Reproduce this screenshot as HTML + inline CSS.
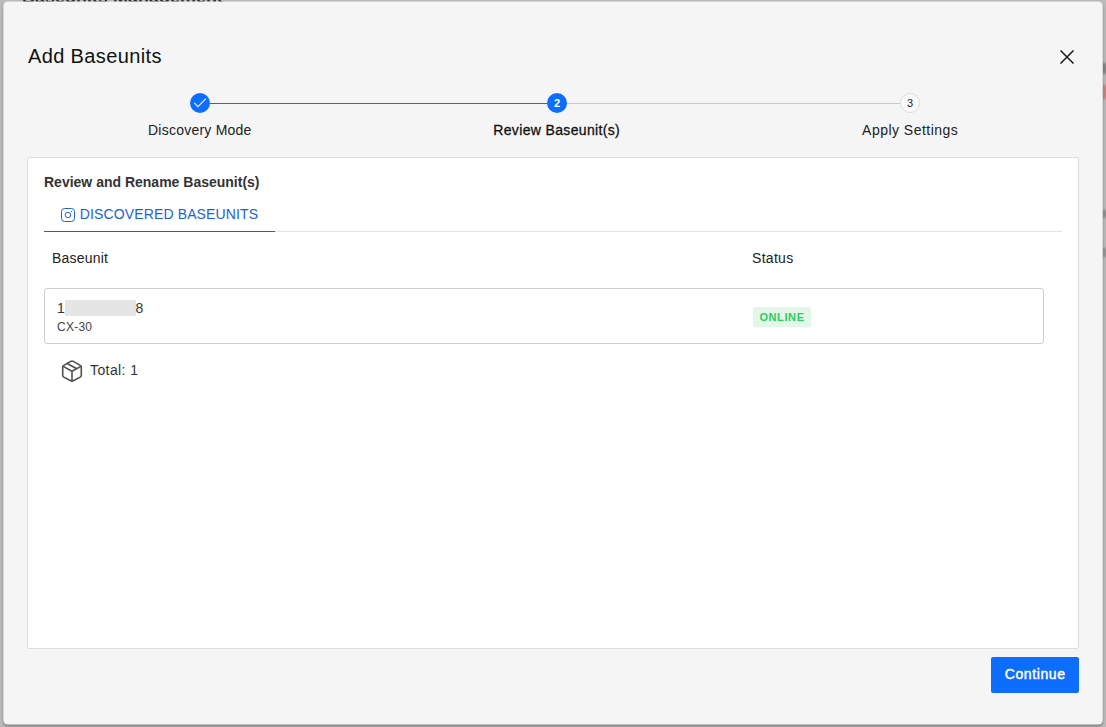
<!DOCTYPE html>
<html><head><meta charset="utf-8"><title>Add Baseunits</title>
<style>
*{box-sizing:border-box;margin:0;padding:0}
html,body{width:1106px;height:727px;overflow:hidden}
body{background:#bbbbbb;font-family:"Liberation Sans",sans-serif;color:#222;position:relative}
.behind{position:absolute;left:22px;top:-13px;font-size:18px;font-weight:bold;color:#333;white-space:nowrap;filter:blur(.5px)}
.modalbg{position:absolute;left:0;top:0;filter:drop-shadow(0 2px 1.5px rgba(0,0,0,.32))}
.modal{position:absolute;left:3px;top:1px;width:1100px;height:723.5px}
.spot{position:absolute;right:0;width:3px;filter:blur(1px)}
.abs{position:absolute;white-space:nowrap;line-height:1}
.title{left:25px;top:45px;font-size:20px;color:#111;letter-spacing:.37px}
.close{position:absolute;left:1056.8px;top:49px;width:14px;height:14px}
.line{position:absolute;height:1px;top:101.5px}
.circ{position:absolute;top:92px;width:20px;height:20px;border-radius:50%;background:#0d6efd;color:#fff;font-size:11px;font-weight:bold;text-align:center;line-height:20px}
.lbl{font-size:14px;top:122px;color:#222;transform:translateX(-50%)}
.panel{position:absolute;left:24px;top:156px;width:1052px;height:492px;background:#fff;border:1px solid #dcdcdc;border-radius:2px}
.btn{position:absolute;left:988px;top:656px;width:88px;height:36px;background:#0d6efd;border-radius:2px;color:#fff;font-size:14px;font-weight:normal;-webkit-text-stroke:.45px #fff;letter-spacing:.6px;text-indent:.3px;text-align:center;line-height:35px}
</style></head><body>
<div class="behind">Baseunits Management</div>
<div class="spot" style="top:63px;height:11px;background:#777"></div>
<div class="spot" style="top:85px;height:14px;background:#c87474"></div>
<div class="spot" style="top:210px;height:8px;background:#848484"></div>
<div class="spot" style="top:248px;height:9px;background:#888"></div>
<svg class="modalbg" width="1106" height="727" viewBox="0 0 1106 727"><rect x="3.3" y="1.4" width="1099.4" height="723.2" rx="4.5" fill="#f5f5f5"/></svg>
<div class="modal">
  <div class="abs title">Add Baseunits</div>
  <svg class="close" viewBox="0 0 14 14"><path d="M0.5 0.5L13.5 13.5M13.5 0.5L0.5 13.5" stroke="#1a1a1a" stroke-width="1.5" fill="none"/></svg>

  <div class="line" style="left:207px;width:337px;background:#0d6efd"></div>
  <div class="line" style="left:564px;width:333px;background:#c8c8c8"></div>
  <div class="circ" style="left:187px"><svg width="20" height="20" viewBox="0 0 20 20" style="display:block"><path d="M4.3 9.9L7.9 13.6L16 5.6" stroke="#e6efff" stroke-width="1.3" fill="none"/></svg></div>
  <div class="circ" style="left:544px">2</div>
  <div class="circ" style="left:897px;background:#fafafa;border:1px solid #dcdcdc;color:#222;font-weight:normal;line-height:18px">3</div>
  <div class="abs lbl" style="left:196.8px;letter-spacing:.23px">Discovery Mode</div>
  <div class="abs lbl" style="left:553.7px;color:#111;letter-spacing:.35px;-webkit-text-stroke:.3px #111">Review Baseunit(s)</div>
  <div class="abs lbl" style="left:907.2px;letter-spacing:.48px">Apply Settings</div>

  <div class="panel">
    <div class="abs" style="left:16px;top:17px;font-size:14px;font-weight:bold;color:#333">Review and Rename Baseunit(s)</div>
    <div style="position:absolute;left:16px;top:73px;width:1018px;height:1px;background:#e4e4e4"></div>
    <div style="position:absolute;left:16px;top:72.5px;width:231px;height:1.5px;background:#1b62d6"></div>
    <svg style="position:absolute;left:33px;top:50px" width="14" height="14" viewBox="0 0 14 14"><rect x=".5" y=".5" width="13" height="13" rx="3" fill="none" stroke="#1b62d6" stroke-width="1"/><circle cx="6.9" cy="7" r="2.75" fill="none" stroke="#1b62d6" stroke-width="1"/><circle cx="10.6" cy="3.4" r=".6" fill="#1b62d6"/></svg>
    <div class="abs" style="left:51.8px;top:49px;font-size:14px;letter-spacing:.13px;color:#1b62d6">DISCOVERED BASEUNITS</div>
    <div class="abs" style="left:24px;top:93px;font-size:14px;letter-spacing:.2px;color:#222">Baseunit</div>
    <div class="abs" style="left:724px;top:93px;font-size:14px;letter-spacing:.3px;color:#222">Status</div>
    <div style="position:absolute;left:16px;top:130px;width:1000px;height:56px;border:1px solid #cfcfcf;border-radius:3px">
      <div class="abs" style="left:12px;top:12px;font-size:14px;color:#333">1</div>
      <div style="position:absolute;left:20px;top:11px;width:71px;height:16px;background:#e5e5e5"></div>
      <div class="abs" style="left:90.5px;top:12px;font-size:14px;color:#333">8</div>
      <div class="abs" style="left:12px;top:32px;font-size:12px;letter-spacing:.25px;color:#444">CX-30</div>
      <div style="position:absolute;left:708px;top:18px;width:58px;height:20px;background:#e2f7e7;border-radius:2px;color:#2fcb5f;font-size:11px;font-weight:bold;text-align:center;letter-spacing:.6px;line-height:20px">ONLINE</div>
    </div>
    <svg style="position:absolute;left:33.1px;top:202px" width="22" height="23" viewBox="0 0 22 23"><g fill="none" stroke="#505050" stroke-width="1.6" stroke-linejoin="round" stroke-linecap="round"><path d="M9.7 1.4Q11 .7 12.3 1.4L19.2 5.4Q20.3 6 20.3 7.3V15.2Q20.3 16.5 19.2 17.1L12.3 20.8Q11 21.5 9.7 20.8L2.8 17.1Q1.7 16.5 1.7 15.2V7.3Q1.7 6 2.8 5.4Z"/><path d="M2.1 6.4L11 11.2L19.9 6.4M11 11.2V21.2M6.3 3.5L15.7 8.7"/></g></svg>
    <div class="abs" style="left:62px;top:205px;font-size:14px;letter-spacing:.4px;color:#333">Total: 1</div>
  </div>
  <div class="btn">Continue</div>
</div>
</body></html>
